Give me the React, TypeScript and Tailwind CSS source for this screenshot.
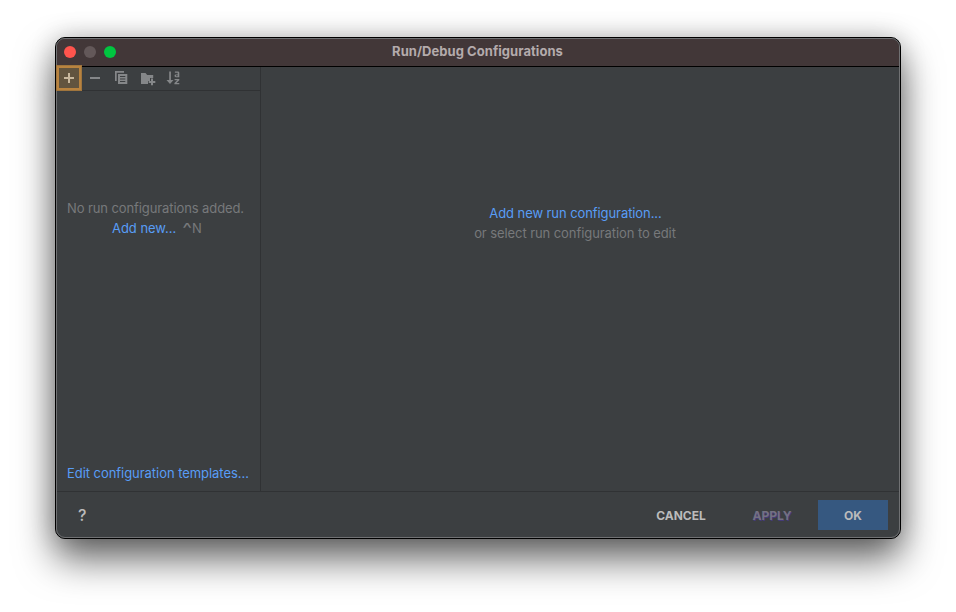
import React from "react";

const link = "text-[#589df6]";

function Toolbar() {
  return (
    <div className="relative flex h-6 shrink-0 items-center border-b border-[#303234]">
      <button aria-label="Add" className="absolute -left-px -top-[2px] flex size-[26px] items-center justify-center border-[3px] border-[#b9833f] bg-[#62543f] outline-1 -outline-offset-1 outline-[#a0753d]">
        <svg width="12" height="12" viewBox="0 0 12 12" fill="#c8b79d"><path d="M5 1h2v4h4v2H7v4H5V7H1V5h4z" /></svg>
      </button>
      <svg className="ml-[25px]" width="135" height="23" viewBox="82 67 135 23" fill="#858789">
        <path d="M90 77h10v2H90z" />
        <path d="M115 71h9v1.7h-7.3V81H115z" />
        <path fillRule="evenodd" d="M118 74h9.3v10H118zM120 76v1h5.3v-1zM120 78.5v1h5.3v-1zM120 81v1h5.3v-1z" />
        <path d="M141 73h4.5l1.7 2h6v3H150v3h-2v3h-7z" />
        <path d="M151 78.5h2V81h2.3v2H153v2.3h-2V83h-2.3v-2h2.3z" />
        <path d="M169.2 71.5h1.7V80h2.6l-3.5 4-3.5-4h2.7z" />
        <path d="M174.9 71.5h3.1q1.3 0 1.3 1.2v4.5h-3.4q-1.4 0-1.4-1.4t1.4-1.4h1.8v-1.6h-2.8zM176 75.2v1h1.7v-1zM174.6 79h4.7v1.3l-2.8 2.6h2.8v1.3h-4.9v-1.3l2.8-2.6h-2.6z" fillRule="evenodd" />
      </svg>
    </div>
  );
}

export default function App() {
  return (
    <main className="h-[612px] w-[956px] overflow-hidden bg-white px-[55px] pt-[37px] font-['Inter',sans-serif] text-[13px]">
      <section className="h-[502px] w-[846px] rounded-[10px] border border-black bg-[#3c3f41] shadow-[0_20px_38px_rgba(0,0,0,0.6),0_0_26px_rgba(0,0,0,0.2)]">
        <div className="flex h-full flex-col rounded-[9px] border border-[#707173]">
          <header className="flex h-7 shrink-0 items-center rounded-t-[8px] border-b border-black bg-[#423738] pb-px">
            <div className="ml-[7px] flex w-[60px] gap-2">
              <i className="size-3 rounded-full bg-[#ff544d]" />
              <i className="size-3 rounded-full bg-[#635859]" />
              <i className="size-3 rounded-full bg-[#00c540]" />
            </div>
            <h1 className="mr-[68px] flex-1 -translate-y-px text-center text-[13px] font-bold leading-4 tracking-[0.05px] text-[#b4abac]">Run/Debug Configurations</h1>
          </header>
          <div className="flex h-[424px] shrink-0">
            <aside className="flex w-[204px] shrink-0 flex-col border-r border-[#303234]">
              <Toolbar />
              <div className="mt-[107px] text-center leading-5 text-[#77797b]">
                <p className="-ml-[6px] whitespace-nowrap tracking-[-0.1px]">No run configurations added.</p>
                <p className="flex pl-[55px]">
                  <span className={link + " tracking-[-0.04px]"}>Add new...</span>
                  <span className="ml-[5px] flex"><span className="flex w-[11px] justify-center"><span className="scale-x-[1.6] scale-y-[1.2]">^</span></span>N</span>
                </p>
              </div>
              <p className={"mt-auto mb-[8px] ml-[10px] whitespace-nowrap leading-5 tracking-[-0.05px] " + link}>Edit configuration templates...</p>
            </aside>
            <div className="flex-1 pr-[10px] pt-[136px] text-center leading-5 tracking-[-0.08px]">
              <p className={"pl-px " + link}>Add new run configuration...</p>
              <p className="text-[#77797b]">or select run configuration to edit</p>
            </div>
          </div>
          <footer className="flex flex-1 items-start border-t border-[#303234] pr-[11px] pt-2 text-xs font-bold text-[#bbbbbb]">
            <button aria-label="Help" className="ml-[21px] h-[30px] text-base font-medium">?</button>
            <button className="ml-auto h-[30px] w-[70px] pt-[2px]">CANCEL</button>
            <button className="ml-[21px] h-[30px] w-[70px] pt-[2px] text-[#747181] [text-shadow:1px_1px_0_#443b78]">APPLY</button>
            <button className="ml-[11px] h-[30px] w-[70px] bg-[#365880] pt-[2px]">OK</button>
          </footer>
        </div>
      </section>
    </main>
  );
}
